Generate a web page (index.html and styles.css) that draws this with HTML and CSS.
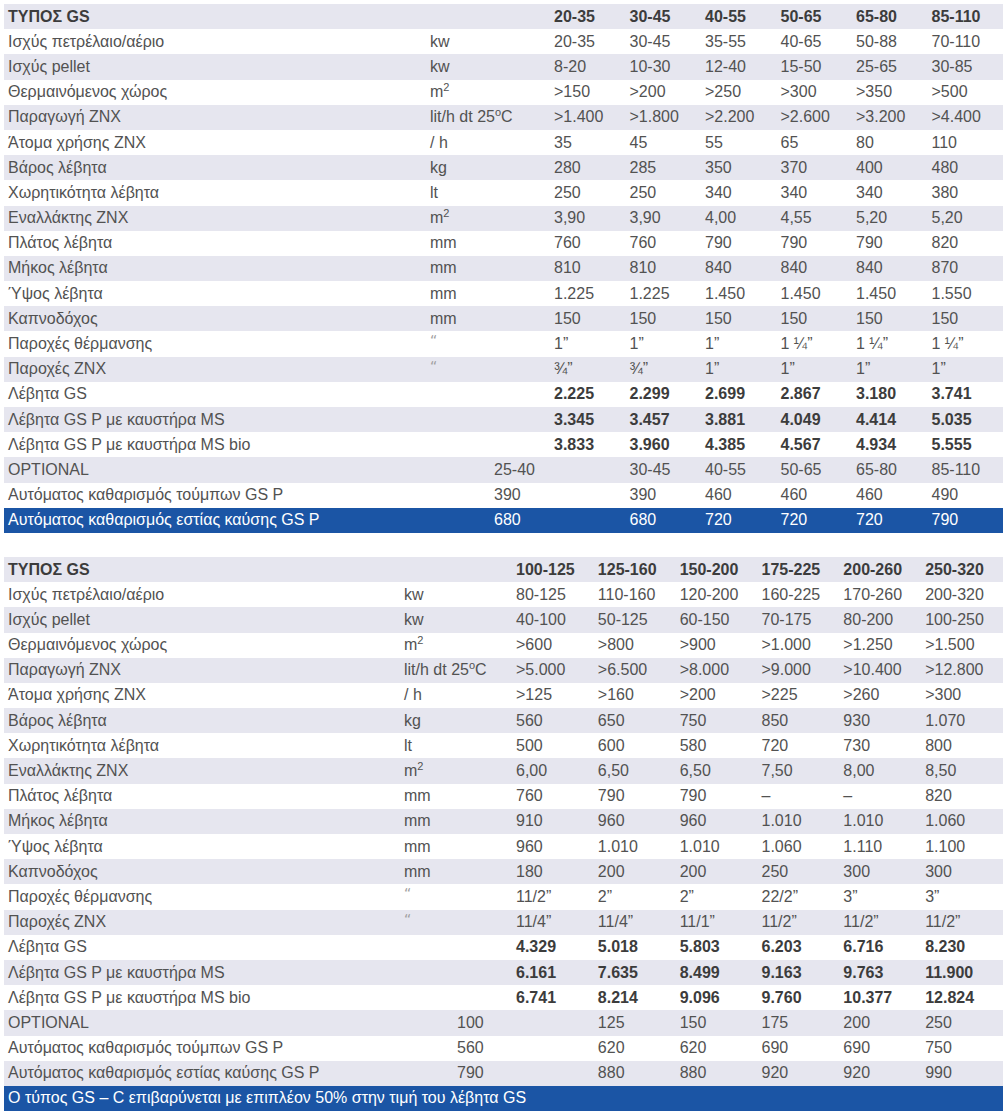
FILE: index.html
```html
<!DOCTYPE html>
<html lang="el">
<head>
<meta charset="utf-8">
<title>ΤΥΠΟΣ GS</title>
<link rel="stylesheet" href="styles.css">
</head>
<body>
<div class="sheet t1">
  <div class="row head"><span class="label">ΤΥΠΟΣ GS</span><span class="unit"></span><span>20-35</span><span>30-45</span><span>40-55</span><span>50-65</span><span>65-80</span><span>85-110</span></div>
  <div class="row"><span class="label">Ισχύς πετρέλαιο/αέριο</span><span class="unit">kw</span><span>20-35</span><span>30-45</span><span>35-55</span><span>40-65</span><span>50-88</span><span>70-110</span></div>
  <div class="row"><span class="label">Ισχύς pellet</span><span class="unit">kw</span><span>8-20</span><span>10-30</span><span>12-40</span><span>15-50</span><span>25-65</span><span>30-85</span></div>
  <div class="row"><span class="label">Θερμαινόμενος χώρος</span><span class="unit">m<sup>2</sup></span><span>&gt;150</span><span>&gt;200</span><span>&gt;250</span><span>&gt;300</span><span>&gt;350</span><span>&gt;500</span></div>
  <div class="row"><span class="label">Παραγωγή ZNX</span><span class="unit">lit/h dt 25<sup>o</sup>C</span><span>&gt;1.400</span><span>&gt;1.800</span><span>&gt;2.200</span><span>&gt;2.600</span><span>&gt;3.200</span><span>&gt;4.400</span></div>
  <div class="row"><span class="label">Άτομα χρήσης ZNX</span><span class="unit">/ h</span><span>35</span><span>45</span><span>55</span><span>65</span><span>80</span><span>110</span></div>
  <div class="row"><span class="label">Βάρος λέβητα</span><span class="unit">kg</span><span>280</span><span>285</span><span>350</span><span>370</span><span>400</span><span>480</span></div>
  <div class="row"><span class="label">Χωρητικότητα λέβητα</span><span class="unit">lt</span><span>250</span><span>250</span><span>340</span><span>340</span><span>340</span><span>380</span></div>
  <div class="row"><span class="label">Εναλλάκτης ZNX</span><span class="unit">m<sup>2</sup></span><span>3,90</span><span>3,90</span><span>4,00</span><span>4,55</span><span>5,20</span><span>5,20</span></div>
  <div class="row"><span class="label">Πλάτος λέβητα</span><span class="unit">mm</span><span>760</span><span>760</span><span>790</span><span>790</span><span>790</span><span>820</span></div>
  <div class="row"><span class="label">Μήκος λέβητα</span><span class="unit">mm</span><span>810</span><span>810</span><span>840</span><span>840</span><span>840</span><span>870</span></div>
  <div class="row"><span class="label">Ύψος λέβητα</span><span class="unit">mm</span><span>1.225</span><span>1.225</span><span>1.450</span><span>1.450</span><span>1.450</span><span>1.550</span></div>
  <div class="row"><span class="label">Καπνοδόχος</span><span class="unit">mm</span><span>150</span><span>150</span><span>150</span><span>150</span><span>150</span><span>150</span></div>
  <div class="row"><span class="label">Παροχές θέρμανσης</span><span class="unit quote">“</span><span>1”</span><span>1”</span><span>1”</span><span>1 ¼”</span><span>1 ¼”</span><span>1 ¼”</span></div>
  <div class="row"><span class="label">Παροχές ZNX</span><span class="unit quote">“</span><span>¾”</span><span>¾”</span><span>1”</span><span>1”</span><span>1”</span><span>1”</span></div>
  <div class="row price"><span class="label">Λέβητα GS</span><span class="unit"></span><span>2.225</span><span>2.299</span><span>2.699</span><span>2.867</span><span>3.180</span><span>3.741</span></div>
  <div class="row price"><span class="label">Λέβητα GS P με καυστήρα MS</span><span class="unit"></span><span>3.345</span><span>3.457</span><span>3.881</span><span>4.049</span><span>4.414</span><span>5.035</span></div>
  <div class="row price"><span class="label">Λέβητα GS P με καυστήρα MS bio</span><span class="unit"></span><span>3.833</span><span>3.960</span><span>4.385</span><span>4.567</span><span>4.934</span><span>5.555</span></div>
  <div class="row opt"><span class="label">OPTIONAL</span><span>25-40</span><span></span><span>30-45</span><span>40-55</span><span>50-65</span><span>65-80</span><span>85-110</span></div>
  <div class="row opt"><span class="label">Αυτόματος καθαρισμός τούμπων GS P</span><span>390</span><span></span><span>390</span><span>460</span><span>460</span><span>460</span><span>490</span></div>
  <div class="row opt blue"><span class="label">Αυτόματος καθαρισμός εστίας καύσης GS P</span><span>680</span><span></span><span>680</span><span>720</span><span>720</span><span>720</span><span>790</span></div>
</div>

<div class="sheet t2">
  <div class="row head"><span class="label">ΤΥΠΟΣ GS</span><span class="unit"></span><span>100-125</span><span>125-160</span><span>150-200</span><span>175-225</span><span>200-260</span><span>250-320</span></div>
  <div class="row"><span class="label">Ισχύς πετρέλαιο/αέριο</span><span class="unit">kw</span><span>80-125</span><span>110-160</span><span>120-200</span><span>160-225</span><span>170-260</span><span>200-320</span></div>
  <div class="row"><span class="label">Ισχύς pellet</span><span class="unit">kw</span><span>40-100</span><span>50-125</span><span>60-150</span><span>70-175</span><span>80-200</span><span>100-250</span></div>
  <div class="row"><span class="label">Θερμαινόμενος χώρος</span><span class="unit">m<sup>2</sup></span><span>&gt;600</span><span>&gt;800</span><span>&gt;900</span><span>&gt;1.000</span><span>&gt;1.250</span><span>&gt;1.500</span></div>
  <div class="row"><span class="label">Παραγωγή ZNX</span><span class="unit">lit/h dt 25<sup>o</sup>C</span><span>&gt;5.000</span><span>&gt;6.500</span><span>&gt;8.000</span><span>&gt;9.000</span><span>&gt;10.400</span><span>&gt;12.800</span></div>
  <div class="row"><span class="label">Άτομα χρήσης ZNX</span><span class="unit">/ h</span><span>&gt;125</span><span>&gt;160</span><span>&gt;200</span><span>&gt;225</span><span>&gt;260</span><span>&gt;300</span></div>
  <div class="row"><span class="label">Βάρος λέβητα</span><span class="unit">kg</span><span>560</span><span>650</span><span>750</span><span>850</span><span>930</span><span>1.070</span></div>
  <div class="row"><span class="label">Χωρητικότητα λέβητα</span><span class="unit">lt</span><span>500</span><span>600</span><span>580</span><span>720</span><span>730</span><span>800</span></div>
  <div class="row"><span class="label">Εναλλάκτης ZNX</span><span class="unit">m<sup>2</sup></span><span>6,00</span><span>6,50</span><span>6,50</span><span>7,50</span><span>8,00</span><span>8,50</span></div>
  <div class="row"><span class="label">Πλάτος λέβητα</span><span class="unit">mm</span><span>760</span><span>790</span><span>790</span><span>–</span><span>–</span><span>820</span></div>
  <div class="row"><span class="label">Μήκος λέβητα</span><span class="unit">mm</span><span>910</span><span>960</span><span>960</span><span>1.010</span><span>1.010</span><span>1.060</span></div>
  <div class="row"><span class="label">Ύψος λέβητα</span><span class="unit">mm</span><span>960</span><span>1.010</span><span>1.010</span><span>1.060</span><span>1.110</span><span>1.100</span></div>
  <div class="row"><span class="label">Καπνοδόχος</span><span class="unit">mm</span><span>180</span><span>200</span><span>200</span><span>250</span><span>300</span><span>300</span></div>
  <div class="row"><span class="label">Παροχές θέρμανσης</span><span class="unit quote">“</span><span>11/2”</span><span>2”</span><span>2”</span><span>22/2”</span><span>3”</span><span>3”</span></div>
  <div class="row"><span class="label">Παροχές ZNX</span><span class="unit quote">“</span><span>11/4”</span><span>11/4”</span><span>11/1”</span><span>11/2”</span><span>11/2”</span><span>11/2”</span></div>
  <div class="row price"><span class="label">Λέβητα GS</span><span class="unit"></span><span>4.329</span><span>5.018</span><span>5.803</span><span>6.203</span><span>6.716</span><span>8.230</span></div>
  <div class="row price"><span class="label">Λέβητα GS P με καυστήρα MS</span><span class="unit"></span><span>6.161</span><span>7.635</span><span>8.499</span><span>9.163</span><span>9.763</span><span>11.900</span></div>
  <div class="row price"><span class="label">Λέβητα GS P με καυστήρα MS bio</span><span class="unit"></span><span>6.741</span><span>8.214</span><span>9.096</span><span>9.760</span><span>10.377</span><span>12.824</span></div>
  <div class="row opt"><span class="label">OPTIONAL</span><span>100</span><span></span><span>125</span><span>150</span><span>175</span><span>200</span><span>250</span></div>
  <div class="row opt"><span class="label">Αυτόματος καθαρισμός τούμπων GS P</span><span>560</span><span></span><span>620</span><span>620</span><span>690</span><span>690</span><span>750</span></div>
  <div class="row opt"><span class="label">Αυτόματος καθαρισμός εστίας καύσης GS P</span><span>790</span><span></span><span>880</span><span>880</span><span>920</span><span>920</span><span>990</span></div>
  <div class="row note blue"><span class="label">Ο τύπος GS – C επιβαρύνεται με επιπλέον 50% στην τιμή του λέβητα GS</span></div>
</div>
</body>
</html>
```

FILE: styles.css
```css
html, body {
  margin: 0;
  padding: 0;
  background: #ffffff;
}

body {
  padding: 4px 3px 0 4px;
  font-family: "Liberation Sans", Arial, sans-serif;
  font-size: 16px;
  color: #525252;
}

.sheet {
  width: 999px;
}

.t1 {
  --cols: 422px 64px 60px repeat(6, 1fr);
}

.t2 {
  margin-top: 24px;
  --cols: 396px 53px 59px repeat(6, 1fr);
}

.row {
  display: grid;
  grid-template-columns: var(--cols);
  height: 25.19px;
  align-items: center;
  white-space: nowrap;
}

.row > span {
  padding-left: 4px;
  line-height: 18px;
}

.sheet .row:nth-child(odd) {
  background: #e6e6ef;
}

.unit {
  grid-column: span 2;
}

.opt .label {
  grid-column: span 2;
}

.note .label {
  grid-column: 1 / -1;
}

.head > span,
.price > span:not(.label) {
  font-weight: bold;
  color: #3c3c3c;
}

.quote {
  color: #a0a0a0;
  font-size: 14px;
  font-family: "DejaVu Sans", sans-serif;
  padding-top: 0;
  align-self: start;
  line-height: 20px;
}

sup {
  font-size: 11px;
  line-height: 0;
  vertical-align: 6px;
}

.sheet .row.blue {
  background: #1b55a5;
  color: #ffffff;
}
```
